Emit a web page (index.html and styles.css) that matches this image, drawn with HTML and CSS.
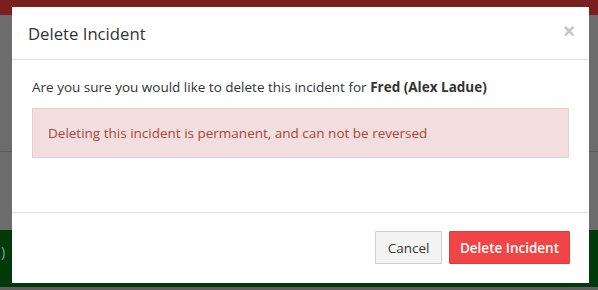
FILE: index.html
```html
<!DOCTYPE html>
<html lang="en">
    <head>
        <meta charset="utf-8" />
        <title>Delete Incident</title>
        <link rel="stylesheet" href="styles.css">
    </head>
    <body>
        <div class="page">
            <div class="topbar"></div>
            <div class="content">
                <div class="rule"></div>
            </div>
            <div class="greenbar"><span class="paren">)</span></div>
            <div class="footer-strip"></div>
        </div>

        <div class="modal">
            <div class="modal-header">
                <h4>Delete Incident</h4>
                <span class="close">&times;</span>
            </div>
            <div class="modal-body">
                <p>Are you sure you would like to delete this incident for <b>Fred (Alex Ladue)</b></p>
                <div class="alert">Deleting this incident is permanent, and can not be reversed</div>
            </div>
            <div class="modal-footer">
                <button class="btn btn-default">Cancel</button>
                <button class="btn btn-danger">Delete Incident</button>
            </div>
        </div>
    </body>
</html>
```

FILE: styles.css
```css
* {
    margin: 0;
    padding: 0;
    box-sizing: border-box;
}
body {
    width: 598px;
    height: 290px;
    overflow: hidden;
    font-family: "Open Sans", "Liberation Sans", sans-serif;
    font-size: 13.5px;
    color: #333;
    background-color: #6b6b6b;
}
.page {
    display: flex;
    flex-direction: column;
    height: 290px;
}
.topbar {
    height: 15px;
    background-color: #7a1e1f;
}
.content {
    flex: 1;
    background-color: #6c6c6c;
}
.rule {
    margin-top: 136px;
    height: 1px;
    background-color: #5c5c5c;
}
.greenbar {
    height: 57px;
    background-color: #033a0b;
    padding-top: 12px;
}
.paren {
    display: block;
    padding-left: 1px;
    color: #8aa59a;
    font-size: 14px;
}
.footer-strip {
    height: 3px;
    background-color: #5e5e5e;
}

/* modal */
.modal {
    position: absolute;
    top: 7px;
    left: 12px;
    width: 577px;
    height: 276px;
    background-color: #fff;
    display: flex;
    flex-direction: column;
}
.modal-header {
    position: relative;
    padding: 16px 16px 14px;
    border-bottom: 1px solid #e5e5e5;
}
.modal-header h4 {
    font-size: 16.7px;
    font-weight: normal;
    line-height: 22px;
}
.close {
    position: absolute;
    top: 14px;
    right: 14px;
    font-family: "Liberation Sans", sans-serif;
    font-size: 20px;
    font-weight: bold;
    line-height: 20px;
    color: #c4c4c4;
}
.modal-body {
    flex: 1;
    padding: 17px 20px 0 20px;
}
.modal-body p {
    line-height: 20px;
    margin-bottom: 11px;
}
.alert {
    padding: 14px 15px;
    line-height: 20px;
    color: #a94442;
    background-color: #f2dede;
    border: 1px solid #ebccd1;
}
.modal-footer {
    display: flex;
    justify-content: flex-end;
    gap: 7px;
    height: 71px;
    padding: 18px 19px 0 0;
    border-top: 1px solid #e5e5e5;
}
.btn {
    height: 33px;
    padding: 0;
    font-family: "Open Sans", "Liberation Sans", sans-serif;
    font-size: 13.5px;
    white-space: nowrap;
    text-align: center;
    border: 1px solid #ccc;
    border-radius: 1px;
    cursor: pointer;
}
.btn-default {
    width: 67px;
    color: #333;
    background-color: #f4f4f4;
}
.btn-danger {
    width: 121px;
    color: #fff;
    font-weight: 600;
    background-color: #f14545;
    border-color: #e23a3a;
}
```
